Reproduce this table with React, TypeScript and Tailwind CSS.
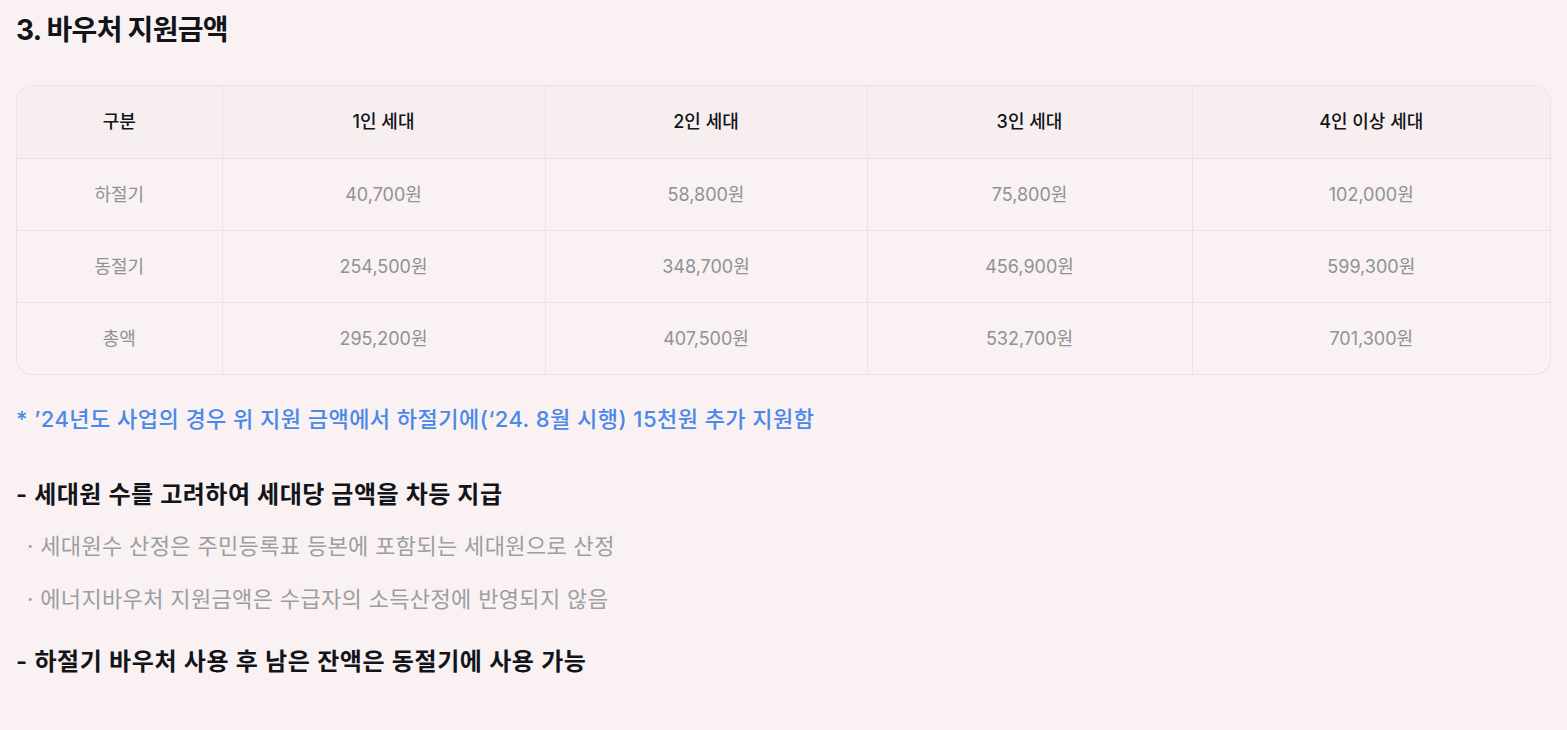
import React from "react";

const cols = ["구분", "1인 세대", "2인 세대", "3인 세대", "4인 이상 세대"];
const widths = ["w-[205px]", "w-[323px]", "w-[322px]", "w-[325px]", ""];
const rows = [
  ["하절기", "40,700원", "58,800원", "75,800원", "102,000원"],
  ["동절기", "254,500원", "348,700원", "456,900원", "599,300원"],
  ["총액", "295,200원", "407,500원", "532,700원", "701,300원"],
];

export default function App() {
  return (
    <div
      className="min-h-[730px] w-full bg-[#f9f1f2] px-4 pt-[12px] text-[#111418]"
      style={{ fontFamily: "Inter, 'Noto Sans CJK KR', sans-serif" }}
    >
      <h2 className="text-[28px] font-bold leading-[36px] tracking-[-0.7px]">3. 바우처 지원금액</h2>
      <div className="mt-[37px] overflow-hidden rounded-[16px] border border-[#e9e3e4]">
        <table className="w-full border-collapse">
          <thead>
            <tr className="h-[72px] bg-[#f6eeef]">
              {cols.map((c, i) => (
                <th
                  key={c}
                  className={`${widths[i]} border-b border-[#e9e3e4] ${i > 0 ? "border-l" : ""} text-[18px] font-medium text-[#111418]`}
                >
                  {c}
                </th>
              ))}
            </tr>
          </thead>
          <tbody>
            {rows.map((r, ri) => (
              <tr key={ri} className="h-[72px]">
                {r.map((v, i) => (
                  <td
                    key={i}
                    className={`${ri < rows.length - 1 ? "border-b" : ""} border-[#e9e3e4] ${i > 0 ? "border-l" : ""} text-center text-[18px] text-[#8f9296]`}
                  >
                    {v}
                  </td>
                ))}
              </tr>
            ))}
          </tbody>
        </table>
      </div>
      <p className="mt-[29px] text-[22px] font-medium leading-[30px] tracking-[0.45px] text-[#4a88ea]">
        * ’24년도 사업의 경우 위 지원 금액에서 하절기에(‘24. 8월 시행) 15천원 추가 지원함
      </p>
      <p className="mt-[46px] text-[24px] font-semibold leading-[30px] tracking-[0.5px]">
        - 세대원 수를 고려하여 세대당 금액을 차등 지급
      </p>
      <p className="mt-[21px] pl-[11px] text-[22px] leading-[30px] tracking-[0.35px] text-[#9b9ea3]">
        · 세대원수 산정은 주민등록표 등본에 포함되는 세대원으로 산정
      </p>
      <p className="mt-[23px] pl-[11px] text-[22px] leading-[30px] tracking-[0.35px] text-[#9b9ea3]">
        · 에너지바우처 지원금액은 수급자의 소득산정에 반영되지 않음
      </p>
      <p className="mt-[33px] text-[24px] font-semibold leading-[30px] tracking-[0.6px]">
        - 하절기 바우처 사용 후 남은 잔액은 동절기에 사용 가능
      </p>
    </div>
  );
}
